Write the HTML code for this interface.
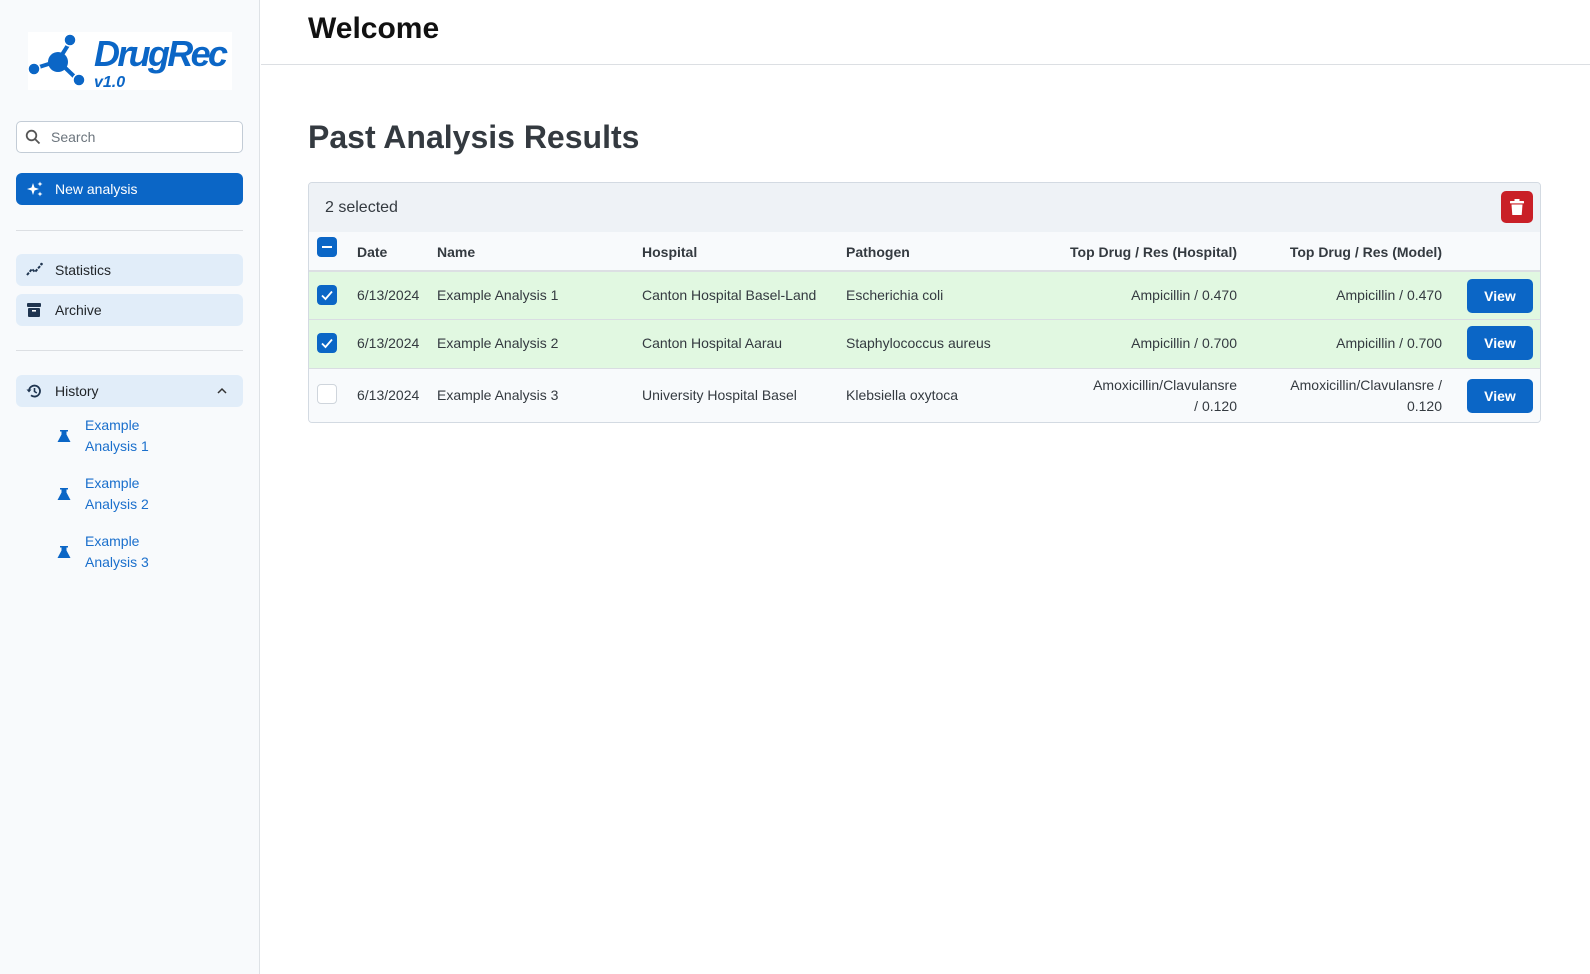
<!DOCTYPE html>
<html><head><meta charset="utf-8"><style>
*{box-sizing:border-box;margin:0;padding:0}
body{width:1590px;height:974px;font-family:"Liberation Sans",sans-serif;background:#fff;color:#212529;position:relative;overflow:hidden;font-size:14px}
.side{position:absolute;left:0;top:0;width:260px;height:974px;background:#f8fafc;border-right:1px solid #dee2e6}
.abs{position:absolute}
.navb{position:absolute;left:16px;width:227px;height:32px;border-radius:6px;background:#e1edf9;display:flex;align-items:center;padding-left:39px;font-size:14px;color:#212529}
.navb svg{position:absolute;left:10px;top:8px}
.hr{position:absolute;left:16px;width:227px;height:1px;background:#dcdfe3}
.hist{position:absolute;left:85px;color:#1a6fcc;font-size:14px;line-height:21px}
.flask{position:absolute;left:57px}
.tbl{position:absolute;left:308px;top:182px;width:1233px;height:241px;border:1px solid #d3dae2;border-radius:4px;overflow:hidden;background:#f8fafc}
.cell{position:absolute;font-size:14px;color:#343a40}
.row{position:absolute;left:0;width:100%;border-top:1px solid #d9dde2}
.view{position:absolute;left:1158px;width:66px;height:34px;background:#0b66c6;color:#fff;border-radius:5px;font-weight:bold;font-size:14px;text-align:center;line-height:34px}
.cb{position:absolute;left:8px;width:20px;height:20px;border-radius:4px;background:#0b66c6}
.r{text-align:right}
.th{position:absolute;font-weight:bold;font-size:14px;color:#343a40;top:61px}
</style></head><body>
<div class="side">
  <svg class="abs" style="left:28px;top:32px" width="204" height="58" viewBox="0 0 204 58">
    <rect width="204" height="58" fill="#fff"/>
    <g fill="#0b66c6" stroke="#0b66c6">
      <line x1="30" y1="29" x2="42" y2="10" stroke-width="4"/>
      <line x1="30" y1="29" x2="8" y2="36" stroke-width="4"/>
      <line x1="30" y1="29" x2="50" y2="48" stroke-width="4"/>
      <circle cx="30" cy="30" r="10" stroke="none"/>
      <circle cx="42" cy="8" r="6" stroke="#fff" stroke-width="1.5"/>
      <circle cx="6" cy="37" r="6" stroke="#fff" stroke-width="1.5"/>
      <circle cx="51" cy="48" r="6" stroke="#fff" stroke-width="1.5"/>
    </g>
    <text x="66" y="34" font-family="Liberation Sans" font-weight="bold" font-style="italic" font-size="36" fill="#0b66c6" textLength="134">DrugRec</text>
    <text x="66" y="55" font-family="Liberation Sans" font-weight="bold" font-style="italic" font-size="16" fill="#0b66c6">v1.0</text>
  </svg>
  <div class="abs" style="left:16px;top:121px;width:227px;height:32px;border:1px solid #c3ccd6;border-radius:5px;background:#fff"></div>
  <svg class="abs" style="left:25px;top:129px" width="16" height="16" viewBox="0 0 16 16"><circle cx="6.5" cy="6.5" r="4.8" fill="none" stroke="#555" stroke-width="1.8"/><line x1="10" y1="10" x2="14.5" y2="14.5" stroke="#555" stroke-width="1.8"/></svg>
  <div class="abs" style="left:51px;top:129px;color:#6c757d;font-size:14px">Search</div>
  <div class="navb" style="top:173px;background:#0b66c6;color:#fff;">
    <svg width="18" height="16" viewBox="0 0 18 16"><path d="M7 2 L8.5 6.5 L13 8 L8.5 9.5 L7 14 L5.5 9.5 L1 8 L5.5 6.5Z" fill="#fff"/><path d="M14 0.5 L14.7 2.3 L16.5 3 L14.7 3.7 L14 5.5 L13.3 3.7 L11.5 3 L13.3 2.3Z" fill="#fff"/><path d="M14 10.5 L14.7 12.3 L16.5 13 L14.7 13.7 L14 15.5 L13.3 13.7 L11.5 13 L13.3 12.3Z" fill="#fff"/></svg>
    New analysis</div>
  <div class="hr" style="top:230px"></div>
  <div class="navb" style="top:254px">
    <svg width="18" height="16" viewBox="0 0 18 16"><path d="M1 13 L6 7 L9 10 L15 3" fill="none" stroke="#1f3550" stroke-width="2" stroke-dasharray="3 1.2"/><circle cx="15.5" cy="2" r="1.3" fill="#1f3550"/></svg>Statistics</div>
  <div class="navb" style="top:294px">
    <svg width="16" height="16" viewBox="0 0 16 16"><rect x="1" y="1" width="14" height="4" rx="1" fill="#1f3550"/><rect x="2" y="6" width="12" height="9" rx="1" fill="#1f3550"/><rect x="6" y="8" width="4" height="1.6" fill="#fff"/></svg>Archive</div>
  <div class="hr" style="top:350px"></div>
  <div class="navb" style="top:375px">
    <svg width="16" height="16" viewBox="0 0 16 16"><path d="M3 8 A5.5 5.5 0 1 1 5 12.3" fill="none" stroke="#1f3550" stroke-width="1.8"/><path d="M0.5 6.5 L3 9.5 L5.5 6.5Z" fill="#1f3550"/><path d="M8.5 5 V8.5 L10.8 10" fill="none" stroke="#1f3550" stroke-width="1.6"/></svg>History
    <svg style="left:201px;top:12px" width="10" height="7" viewBox="0 0 10 7"><path d="M1 6 L5 2 L9 6" fill="none" stroke="#333" stroke-width="1.5"/></svg></div>
  <svg class="flask" style="top:429px" width="14" height="14" viewBox="0 0 14 14"><path d="M3 1 H11 V2.5 H9.5 V5.5 L13.5 13 H0.5 L4.5 5.5 V2.5 H3Z" fill="#0b66c6"/></svg>
  <div class="hist" style="top:415px">Example<br>Analysis 1</div>
  <svg class="flask" style="top:487px" width="14" height="14" viewBox="0 0 14 14"><path d="M3 1 H11 V2.5 H9.5 V5.5 L13.5 13 H0.5 L4.5 5.5 V2.5 H3Z" fill="#0b66c6"/></svg>
  <div class="hist" style="top:473px">Example<br>Analysis 2</div>
  <svg class="flask" style="top:545px" width="14" height="14" viewBox="0 0 14 14"><path d="M3 1 H11 V2.5 H9.5 V5.5 L13.5 13 H0.5 L4.5 5.5 V2.5 H3Z" fill="#0b66c6"/></svg>
  <div class="hist" style="top:531px">Example<br>Analysis 3</div>
</div>
<div class="abs" style="left:261px;top:64px;width:1329px;height:1px;background:#dcdfe3"></div>
<div class="abs" style="left:308px;top:12px;font-size:30px;font-weight:bold;color:#111">Welcome</div>
<div class="abs" style="left:308px;top:119px;font-size:32px;font-weight:bold;color:#343a40">Past Analysis Results</div>

<div class="tbl">
  <div class="abs" style="left:0;top:0;width:100%;height:49px;background:#eef2f6"></div>
  <div class="cell" style="left:16px;top:16px;font-size:16px">2 selected</div>
  <div class="abs" style="left:1192px;top:8px;width:32px;height:32px;background:#c92027;border-radius:5px">
    <svg style="position:absolute;left:9px;top:8px" width="14" height="16" viewBox="0 0 14 16"><rect x="0" y="2" width="14" height="2.4" rx="0.6" fill="#fff"/><rect x="4.5" y="0" width="5" height="2.5" fill="#fff"/><path d="M1.5 5.5 H12.5 L11.7 16 H2.3Z" fill="#fff"/></svg></div>
  <div class="cb" style="top:54px"><div style="position:absolute;left:5px;top:9px;width:10px;height:2px;background:#fff"></div></div>
  <div class="th" style="left:48px">Date</div>
  <div class="th" style="left:128px">Name</div>
  <div class="th" style="left:333px">Hospital</div>
  <div class="th" style="left:537px">Pathogen</div>
  <div class="th r" style="right:303px">Top Drug / Res (Hospital)</div>
  <div class="th r" style="right:98px">Top Drug / Res (Model)</div>

  <div class="row" style="top:87px;height:49px;background:#e1f8e1;border-top:2px solid #dcdfe3">
    <div class="cb" style="top:13px"><svg width="20" height="20"><path d="M5 10.5 L8.5 14 L15 6.5" fill="none" stroke="#fff" stroke-width="1.8"/></svg></div>
    <div class="cell" style="left:48px;top:15px">6/13/2024</div>
    <div class="cell" style="left:128px;top:15px">Example Analysis 1</div>
    <div class="cell" style="left:333px;top:15px">Canton Hospital Basel-Land</div>
    <div class="cell" style="left:537px;top:15px">Escherichia coli</div>
    <div class="cell r" style="right:303px;top:15px">Ampicillin / 0.470</div>
    <div class="cell r" style="right:98px;top:15px">Ampicillin / 0.470</div>
    <div class="view" style="top:7px">View</div>
  </div>
  <div class="row" style="top:136px;height:49px;background:#e1f8e1">
    <div class="cb" style="top:13px"><svg width="20" height="20"><path d="M5 10.5 L8.5 14 L15 6.5" fill="none" stroke="#fff" stroke-width="1.8"/></svg></div>
    <div class="cell" style="left:48px;top:15px">6/13/2024</div>
    <div class="cell" style="left:128px;top:15px">Example Analysis 2</div>
    <div class="cell" style="left:333px;top:15px">Canton Hospital Aarau</div>
    <div class="cell" style="left:537px;top:15px">Staphylococcus aureus</div>
    <div class="cell r" style="right:303px;top:15px">Ampicillin / 0.700</div>
    <div class="cell r" style="right:98px;top:15px">Ampicillin / 0.700</div>
    <div class="view" style="top:6px">View</div>
  </div>
  <div class="row" style="top:185px;height:56px;background:#f8fafc">
    <div class="cb" style="top:15px;background:#fff;border:1px solid #cfd5dc"></div>
    <div class="cell" style="left:48px;top:18px">6/13/2024</div>
    <div class="cell" style="left:128px;top:18px">Example Analysis 3</div>
    <div class="cell" style="left:333px;top:18px">University Hospital Basel</div>
    <div class="cell" style="left:537px;top:18px">Klebsiella oxytoca</div>
    <div class="cell r" style="right:303px;top:6px;line-height:21px">Amoxicillin/Clavulansre<br>/ 0.120</div>
    <div class="cell r" style="right:98px;top:6px;line-height:21px">Amoxicillin/Clavulansre /<br>0.120</div>
    <div class="view" style="top:10px">View</div>
  </div>
</div>
</body></html>
